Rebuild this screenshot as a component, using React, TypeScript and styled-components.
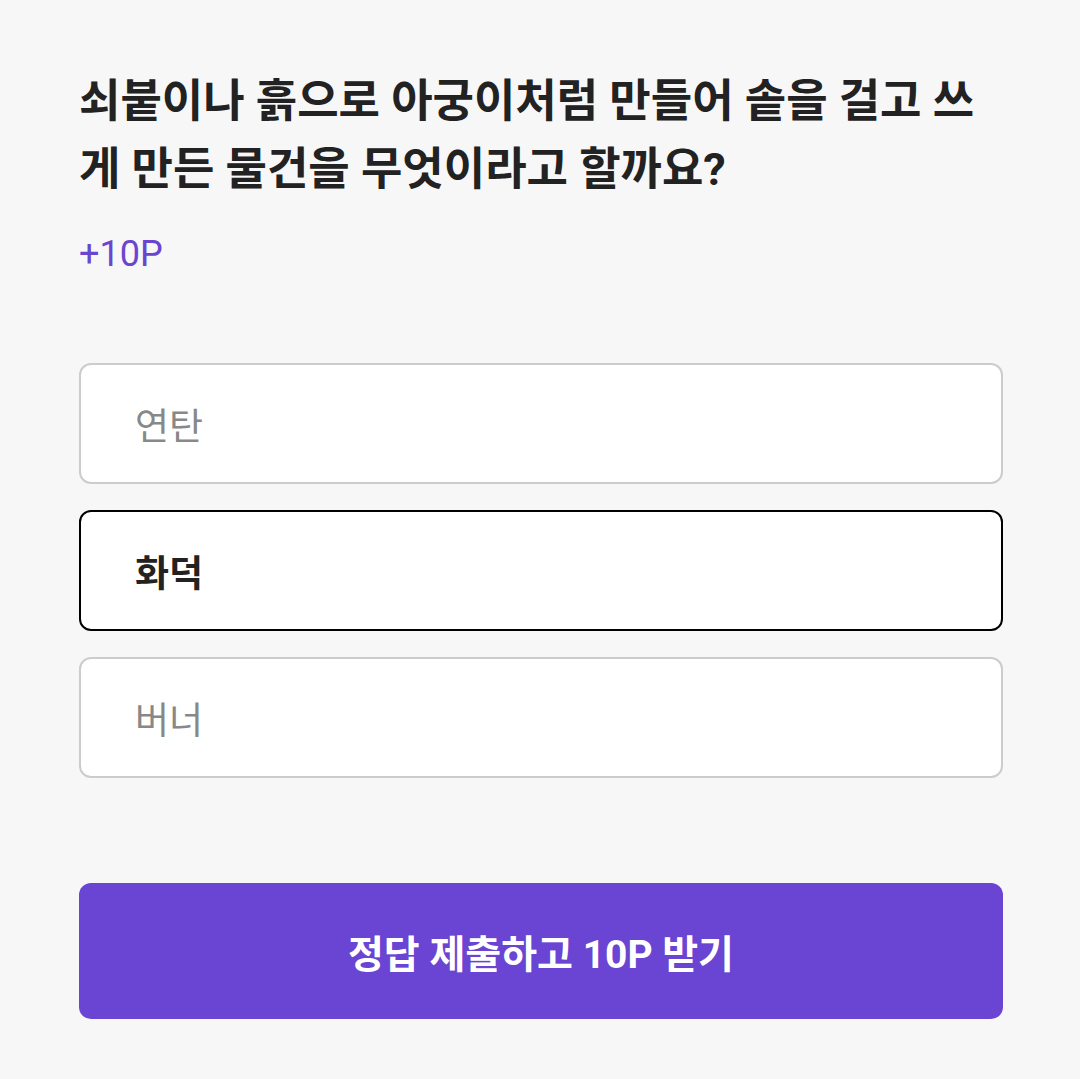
import React, { useState } from "react";
import styled, { createGlobalStyle } from "styled-components";

const GlobalStyle = createGlobalStyle`
  html, body {
    margin: 0;
    padding: 0;
    background: #f7f7f7;
  }
  body {
    font-family: Roboto, "Noto Sans CJK KR", "Noto Sans", sans-serif;
    -webkit-font-smoothing: antialiased;
  }
`;

const Page = styled.main`
  box-sizing: border-box;
  width: 1080px;
  min-height: 1079px;
  padding: 68px 77px 0 79px;
  background: #f7f7f7;
  display: flex;
  flex-direction: column;
`;

const Question = styled.h1`
  margin: 0;
  font-size: 45px;
  line-height: 68px;
  font-weight: 700;
  color: #222222;
  letter-spacing: 0;
`;

const Points = styled.div`
  margin-top: 28px;
  font-size: 36px;
  line-height: 44px;
  font-weight: 400;
  color: #6a45cf;
`;

const OptionList = styled.div`
  margin-top: 87px;
  display: flex;
  flex-direction: column;
  gap: 26px;
`;

const Option = styled.button<{ $selected?: boolean }>`
  box-sizing: border-box;
  width: 100%;
  height: 121px;
  display: flex;
  align-items: center;
  padding: 0 0 0 54px;
  background: #ffffff;
  border: 2px solid ${(p) => (p.$selected ? "#000000" : "#cccccc")};
  border-radius: 12px;
  font-family: inherit;
  font-size: 37px;
  font-weight: ${(p) => (p.$selected ? 700 : 400)};
  color: ${(p) => (p.$selected ? "#222222" : "#888888")};
  text-align: left;
  cursor: pointer;
`;

const SubmitButton = styled.button`
  margin-top: 105px;
  box-sizing: border-box;
  width: 100%;
  height: 136px;
  border: none;
  border-radius: 12px;
  background: #6a44d2;
  color: #ffffff;
  font-family: inherit;
  font-size: 39px;
  font-weight: 700;
  cursor: pointer;
`;

const options = ["연탄", "화덕", "버너"];

export default function App() {
  const [selected, setSelected] = useState(1);
  return (
    <>
      <GlobalStyle />
      <Page>
        <Question>
          쇠붙이나 흙으로 아궁이처럼 만들어 솥을 걸고 쓰게 만든 물건을 무엇이라고 할까요?
        </Question>
        <Points>+10P</Points>
        <OptionList>
          {options.map((o, i) => (
            <Option key={o} $selected={selected === i} onClick={() => setSelected(i)}>
              {o}
            </Option>
          ))}
        </OptionList>
        <SubmitButton>정답 제출하고 10P 받기</SubmitButton>
      </Page>
    </>
  );
}
